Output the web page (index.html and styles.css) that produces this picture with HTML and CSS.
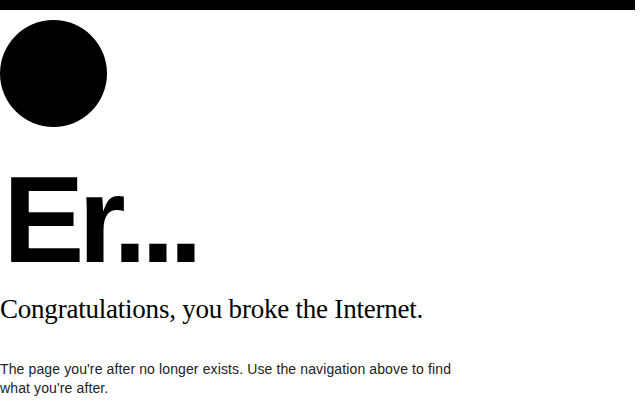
FILE: index.html
```html
<!DOCTYPE html>
<html lang="en">
<head>
<meta charset="utf-8">
<title>Er...</title>
<link rel="stylesheet" href="styles.css">
</head>
<body>
<div class="topbar"></div>
<main class="error">
  <div class="logo"></div>
  <h1 class="title">Er...</h1>
  <h2 class="subtitle">Congratulations, you broke the Internet.</h2>
  <p class="message">The page you're after no longer exists. Use the navigation above to find what you're after.</p>
</main>
</body>
</html>
```
FILE: styles.css
```css
html, body {
  margin: 0;
  padding: 0;
  background: #fff;
}
.topbar {
  width: 635px;
  height: 10px;
  background: #000;
}
.error {
  display: flex;
  flex-direction: column;
  align-items: flex-start;
}
.logo {
  width: 107px;
  height: 107px;
  border-radius: 50%;
  background: #000;
  margin-top: 10px;
}
.title {
  margin: 32px 0 0 3px;
  font-family: "Liberation Sans", Arial, sans-serif;
  font-weight: 700;
  font-size: 122px;
  line-height: 1;
  letter-spacing: -6px;
  color: #000;
}
.subtitle {
  margin: 12px 0 0 0;
  font-family: "Liberation Serif", "Times New Roman", serif;
  font-weight: 400;
  font-size: 27px;
  line-height: 1.2;
  letter-spacing: -0.22px;
  color: #000;
}
.message {
  margin: 35px 0 0 0;
  width: 470px;
  font-family: "Liberation Sans", Arial, sans-serif;
  font-size: 14px;
  line-height: 19px;
  letter-spacing: 0.12px;
  color: #222;
}
```
